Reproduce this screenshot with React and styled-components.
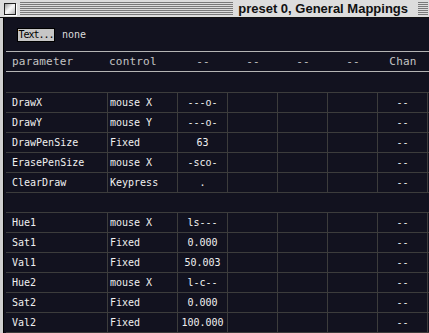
import { createGlobalStyle, styled } from 'styled-components'

const GlobalStyle = createGlobalStyle`
  html, body {
    margin: 0;
    padding: 0;
    overflow: hidden;
    background: #d6d6d6;
  }
`

const mono = `"DejaVu Sans Mono", "Liberation Mono", monospace`

const groups = [
  [
    ['DrawX', 'mouse X', '---o-'],
    ['DrawY', 'mouse Y', '---o-'],
    ['DrawPenSize', 'Fixed', '63'],
    ['ErasePenSize', 'mouse X', '-sco-'],
    ['ClearDraw', 'Keypress', '.'],
  ],
  [
    ['Hue1', 'mouse X', 'ls---'],
    ['Sat1', 'Fixed', '0.000'],
    ['Val1', 'Fixed', '50.003'],
    ['Hue2', 'mouse X', 'l-c--'],
    ['Sat2', 'Fixed', '0.000'],
    ['Val2', 'Fixed', '100.000'],
  ],
]

const App = () => {
  return (
    <>
      <GlobalStyle />
      <Window>
        <TitleBar>
          <CloseBox />
          <Stripes />
          <Title>preset 0, General Mappings</Title>
          <Stripes $width="10px" />
        </TitleBar>
        <Frame>
          <Content>
            <Toolbar>
              <TextButton>Text...</TextButton>
              <Label>none</Label>
            </Toolbar>
            <HeaderRow>
              <HeadCell $pad="6px">parameter</HeadCell>
              <HeadCell $pad="1px">control</HeadCell>
              <HeadCell $center>--</HeadCell>
              <HeadCell $center>--</HeadCell>
              <HeadCell $center>--</HeadCell>
              <HeadCell $center>--</HeadCell>
              <HeadCell $center>Chan</HeadCell>
              <span />
            </HeaderRow>
            <Spacer $h="20px" />
            {groups.map((rows, gi) => (
              <Group key={gi}>
                {rows.map(([name, control, value]) => (
                  <Row key={name}>
                    <Cell $pad="6px">{name}</Cell>
                    <Cell $pad="2px">{control}</Cell>
                    <Cell $center>{value}</Cell>
                    <Cell />
                    <Cell />
                    <Cell />
                    <Cell $center>--</Cell>
                    <Filler />
                  </Row>
                ))}
                {gi === 0 && <Spacer $h="19px" />}
              </Group>
            ))}
          </Content>
        </Frame>
      </Window>
    </>
  )
}

const Window = styled.div`
  width: 429px;
  height: 333px;
  display: flex;
  flex-direction: column;
  overflow: hidden;
`

const TitleBar = styled.div`
  height: 17px;
  flex: none;
  display: flex;
  align-items: center;
  padding: 0 1px 0 4px;
  background: #dddddd;
  border-bottom: 1px solid #111;
`

const CloseBox = styled.div`
  width: 12px;
  height: 12px;
  box-sizing: border-box;
  border: 1px solid #222;
  background: linear-gradient(135deg, #9a9a9a 0%, #f4f4f4 45%, #f4f4f4 55%, #b0b0b0 100%);
  box-shadow: 1px 1px 0 #fff;
`

const Stripes = styled.div`
  flex: ${p => (p.$width ? 'none' : '1')};
  width: ${p => p.$width || 'auto'};
  height: 13px;
  margin-left: ${p => (p.$width ? '0' : '4px')};
  background: repeating-linear-gradient(to bottom, #7a7a7a 0 1px, #dddddd 1px 2px);
`

const Title = styled.div`
  padding: 0 10px 0 5px;
  font-family: "Liberation Sans", Arial, sans-serif;
  font-weight: bold;
  font-size: 13px;
  color: #111;
  white-space: nowrap;
`

const Frame = styled.div`
  flex: 1;
  display: flex;
  padding-left: 3px;
  background: #cfcfcf;
  min-height: 0;
`

const Content = styled.div`
  flex: 1;
  background: #12121f;
  border-left: 1px solid #000;
  padding-left: 2px;
  display: flex;
  flex-direction: column;
`

const Toolbar = styled.div`
  height: 33px;
  flex: none;
  display: flex;
  align-items: center;
  gap: 7px;
  padding-left: 11px;
`

const TextButton = styled.button`
  height: 14px;
  width: 38px;
  padding: 0;
  box-sizing: border-box;
  border: 1px solid #000;
  background: #c6c6c6;
  font-family: ${mono};
  font-size: 10px;
  letter-spacing: -1px;
  line-height: 12px;
  color: #000;
`

const Label = styled.span`
  font-family: ${mono};
  font-size: 10px;
  color: #dcdcdc;
`

const cols = `102px 70px 50px 50px 50px 50px 50px 1fr`

const HeaderRow = styled.div`
  display: grid;
  grid-template-columns: ${cols};
  height: 19px;
  flex: none;
  border-top: 1px solid #b4b4b4;
  border-bottom: 1px solid #b4b4b4;
`

const HeadCell = styled.div`
  display: flex;
  align-items: center;
  justify-content: ${p => (p.$center ? 'center' : 'flex-start')};
  padding-left: ${p => p.$pad || '0'};
  font-family: ${mono};
  font-size: 11px;
  letter-spacing: 0.2px;
  color: #c4c4c4;
`

const Spacer = styled.div`
  height: ${p => p.$h};
  flex: none;
`

const Group = styled.div`
  border-top: 1px solid #3c3c3c;
  flex: none;
`

const Row = styled.div`
  display: grid;
  grid-template-columns: ${cols};
  height: 20px;
  box-sizing: border-box;
  border-bottom: 1px solid #3c3c3c;
`

const Cell = styled.div`
  display: flex;
  align-items: center;
  justify-content: ${p => (p.$center ? 'center' : 'flex-start')};
  padding-left: ${p => p.$pad || '0'};
  border-right: 1px solid #3c3c3c;
  font-family: ${mono};
  font-size: 10px;
  color: #f0f0f0;
  white-space: nowrap;
  overflow: hidden;
`

const Filler = styled.div``

export default App
